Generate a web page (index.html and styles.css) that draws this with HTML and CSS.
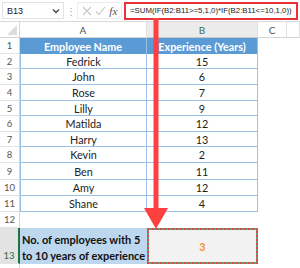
FILE: index.html
```html
<!DOCTYPE html>
<html>
<head>
<meta charset="utf-8">
<link rel="stylesheet" href="styles.css">
</head>
<body>
<div class="app">
  <div class="fbar">
    <div class="namebox"><span class="ref">B13</span><svg class="chev" width="8" height="6" viewBox="0 0 8 6"><path d="M1 1.5 L4 4.5 L7 1.5" fill="none" stroke="#444" stroke-width="1.3"/></svg></div>
    <div class="dots">⋮</div>
    <div class="fxbox">
      <svg width="10" height="10" viewBox="0 0 10 10"><path d="M1 1 L9 9 M9 1 L1 9" stroke="#c8c8c8" stroke-width="1.1"/></svg>
      <svg width="11" height="10" viewBox="0 0 11 10"><path d="M1 5.5 L4 8.5 L10 1" fill="none" stroke="#c8c8c8" stroke-width="1.1"/></svg>
      <span class="fx">fx</span>
    </div>
    <div class="formula">=SUM(IF(B2:B11&gt;=5,1,0)*IF(B2:B11&lt;=10,1,0))</div>
  </div>
  <div class="sheet">
    <div class="row hdr">
      <div class="rh corner"><svg width="10" height="10" viewBox="0 0 10 10"><path d="M10 0 L10 10 L0 10 Z" fill="#dcdcdc"/></svg></div>
      <div class="c a ch">A</div><div class="c b ch sel">B</div><div class="c cc ch">C</div><div class="c d ch"></div>
    </div>
    <div class="row r16"><div class="rh">1</div><div class="c a th">Employee Name</div><div class="c b th">Experience (Years)</div><div class="c cc"></div><div class="c d"></div></div>
    <div class="row r15"><div class="rh">2</div><div class="c a td">Fedrick</div><div class="c b td">15</div><div class="c cc"></div><div class="c d"></div></div>
    <div class="row r16"><div class="rh">3</div><div class="c a td">John</div><div class="c b td">6</div><div class="c cc"></div><div class="c d"></div></div>
    <div class="row r16"><div class="rh">4</div><div class="c a td">Rose</div><div class="c b td">7</div><div class="c cc"></div><div class="c d"></div></div>
    <div class="row r15"><div class="rh">5</div><div class="c a td">Lilly</div><div class="c b td">9</div><div class="c cc"></div><div class="c d"></div></div>
    <div class="row r16"><div class="rh">6</div><div class="c a td">Matilda</div><div class="c b td">12</div><div class="c cc"></div><div class="c d"></div></div>
    <div class="row r15"><div class="rh">7</div><div class="c a td">Harry</div><div class="c b td">13</div><div class="c cc"></div><div class="c d"></div></div>
    <div class="row r16"><div class="rh">8</div><div class="c a td">Kevin</div><div class="c b td">2</div><div class="c cc"></div><div class="c d"></div></div>
    <div class="row r17"><div class="rh">9</div><div class="c a td">Ben</div><div class="c b td">11</div><div class="c cc"></div><div class="c d"></div></div>
    <div class="row r16"><div class="rh">10</div><div class="c a td">Amy</div><div class="c b td">12</div><div class="c cc"></div><div class="c d"></div></div>
    <div class="row r16"><div class="rh">11</div><div class="c a td">Shane</div><div class="c b td">4</div><div class="c cc"></div><div class="c d"></div></div>
    <div class="row r16"><div class="rh">12</div><div class="c a"></div><div class="c b"></div><div class="c cc"></div><div class="c d"></div></div>
    <div class="row r36"><div class="rh selrow">13</div><div class="c a label">No. of employees with 5<br>to 10 years of experience</div><div class="c b result"><span>3</span></div><div class="c cc"></div><div class="c d"></div></div>
    <div class="row r8"><div class="rh"></div><div class="c a"></div><div class="c b"></div><div class="c cc"></div><div class="c d"></div></div>
  </div>
  <svg class="arrow" width="30" height="212" viewBox="0 0 30 212">
    <rect x="10.5" y="0" width="5" height="192" fill="#ff4040"/>
    <polygon points="1,190 25,190 13,211" fill="#ff4040"/>
  </svg>
</div>
</body>
</html>
```
FILE: styles.css
```css
* { box-sizing: border-box; }
html, body { margin: 0; padding: 0; background: #fff; }
.app { position: relative; width: 300px; height: 268px; overflow: hidden; font-family: Lato, "Liberation Sans", sans-serif; }

.fbar { height: 22px; display: flex; align-items: center; padding: 0 2px; gap: 0; border-bottom: 1px solid #d9d9d9; background: #fff; }
.namebox { width: 62px; height: 17px; border: 1px solid #e2e2e2; display: flex; align-items: center; justify-content: space-between; padding: 0 3px 0 4px; font-size: 9px; color: #222; font-family: "Liberation Sans", sans-serif; }
.dots { width: 13px; text-align: center; color: #999; font-size: 10px; line-height: 1; }
.fxbox { width: 45px; height: 17px; border: 1px solid #ececec; display: flex; align-items: center; justify-content: space-around; padding: 0 2px; }
.fx { font-family: "Liberation Serif", serif; font-style: italic; font-size: 11px; color: #555; }
.formula { margin-left: 2px; flex: 1; height: 18px; border: 2px solid #e8323a; font-family: "Liberation Sans", sans-serif; font-size: 7.8px; color: #222; display: flex; align-items: center; padding-left: 4px; white-space: nowrap; overflow: hidden; }

.sheet { display: flex; flex-direction: column; }
.row { display: flex; }
.hdr { height: 16px; }
.r15 { height: 15px; }
.r16 { height: 16px; }
.r17 { height: 17px; }
.r36 { height: 36px; }
.r8 { height: 10px; }

.rh { width: 20px; flex: none; border-right: 1px solid #d4d4d4; border-bottom: 1px solid #e4e4e4; font-size: 9.5px; color: #555; display: flex; align-items: center; justify-content: center; }
.corner { align-items: flex-end; justify-content: flex-end; padding: 0 2px 2px 0; border-bottom: 1px solid #d4d4d4; }
.selrow { background: #e3e3e3; border-right: 2px solid #217346; color: #2b6e4e; align-items: flex-end; padding-bottom: 2px; }

.c { flex: none; display: flex; align-items: center; justify-content: center; }
.a { width: 127px; }
.b { width: 111px; }
.cc { width: 29px; }
.d { width: 13px; }
.ch { font-size: 10px; color: #555; border-bottom: 1px solid #d4d4d4; border-right: 1px solid #e1e1e1; }
.ch.sel { background: #ebebeb; border-bottom: 1px solid #c8c8c8; color: #3a6e55; }

.th { background: #5b9bd5; color: #fff; font-weight: 700; font-size: 10.8px; border-right: 1px solid #9bc2e6; }
.td { font-size: 10.8px; color: #222; border-bottom: 1px solid #9bc2e6; border-right: 1px solid #9bc2e6; }
.td.a { border-left: 1px solid #9bc2e6; }

.label { background: #bdd7ee; font-weight: 700; font-size: 11px; color: #111; justify-content: flex-start; text-align: left; padding: 3px 0 0 2px; line-height: 16px; white-space: nowrap; }
.result { border: 2px dotted #e04848; background: linear-gradient(#f2f2f2, #f2f2f2) padding-box, linear-gradient(#6a9a76, #6a9a76) border-box; font-weight: 700; font-size: 10.8px; color: #f29530; }

.arrow { position: absolute; left: 143px; top: 18px; }
```
